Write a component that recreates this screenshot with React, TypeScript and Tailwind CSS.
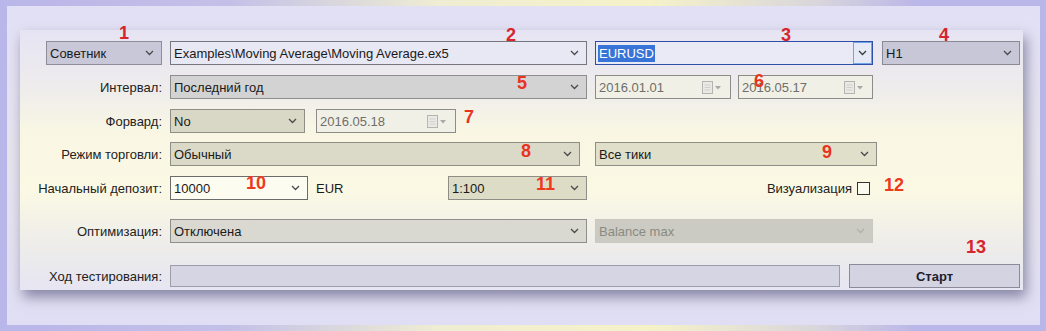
import React from "react";

const Chevron = ({ c = "#4a4a4a" }: { c?: string }) => (
  <svg width="9" height="6" viewBox="0 0 9 6" className="shrink-0">
    <path d="M1 1 L4.5 4.5 L8 1" fill="none" stroke={c} strokeWidth="1.3" />
  </svg>
);

const CalIcon = () => (
  <svg width="20" height="13" viewBox="0 0 20 13" className="shrink-0">
    <rect x="0.5" y="0.5" width="10" height="12" fill="#e9e9e6" stroke="#b4b4b0" />
    <path d="M2.5 4 H8.5 M2.5 6.5 H8.5 M2.5 9 H8.5" stroke="#d0d0cc" strokeWidth="1" />
    <path d="M13 5 L19 5 L16 8.5 Z" fill="#a8a8a8" />
  </svg>
);

function Combo({
  className,
  text,
  textClass = "text-[#1a1a1a]",
  chev,
}: {
  className: string;
  text: React.ReactNode;
  textClass?: string;
  chev?: string;
}) {
  return (
    <div
      className={`flex h-[24px] shrink-0 items-center justify-between border pl-[3px] pr-[7px] ${className}`}
    >
      <span className={textClass}>{text}</span>
      <Chevron c={chev} />
    </div>
  );
}

function DateBox({ w, value }: { w: string; value: string }) {
  return (
    <div
      className={`flex h-[24px] shrink-0 items-center justify-between border border-[#8c8c88] bg-[#f1f0e6] pl-[3px] pr-[8px] text-[#6e6e6a] ${w}`}
    >
      <span>{value}</span>
      <CalIcon />
    </div>
  );
}

const Label = ({ children }: { children: React.ReactNode }) => (
  <div className="w-[150px] shrink-0 pr-[8px] text-right text-[#222222]">{children}</div>
);

const MARKS = [
  { n: "1", x: "left-[119px]", y: "top-[24px]", c: "text-[#d6252d]" },
  { n: "2", x: "left-[506px]", y: "top-[26px]", c: "text-[#d6252d]" },
  { n: "3", x: "left-[781px]", y: "top-[26px]", c: "text-[#d6252d]" },
  { n: "4", x: "left-[939px]", y: "top-[26px]", c: "text-[#d6252d]" },
  { n: "5", x: "left-[517px]", y: "top-[74px]", c: "text-[#e8331f]" },
  { n: "6", x: "left-[754px]", y: "top-[72px]", c: "text-[#e8331f]" },
  { n: "7", x: "left-[464px]", y: "top-[108px]", c: "text-[#e8331f]" },
  { n: "8", x: "left-[521px]", y: "top-[142px]", c: "text-[#e8331f]" },
  { n: "9", x: "left-[822px]", y: "top-[143px]", c: "text-[#e8331f]" },
  { n: "10", x: "left-[246px]", y: "top-[174px]", c: "text-[#ee3a1c]" },
  { n: "11", x: "left-[536px]", y: "top-[175px]", c: "text-[#ee3a1c]" },
  { n: "12", x: "left-[884px]", y: "top-[176px]", c: "text-[#ee3a1c]" },
  { n: "13", x: "left-[966px]", y: "top-[238px]", c: "text-[#d6252d]" },
];

export default function App() {
  return (
    <div className="relative h-[331px] w-[1046px] overflow-hidden bg-[linear-gradient(90deg,#b9b6e9_0%,#c3c0e8_22%,#efedd2_42%,#f5f2c9_62%,#d9d6dc_78%,#b9b6e9_88%)] pb-[6px] pl-[7px] pr-[6px] pt-[6px] font-['Liberation_Sans',Arial,sans-serif] text-[13px] leading-none">
      <div className="h-full w-full bg-[linear-gradient(180deg,#e2e0f5_0%,#e6e4ee_45%,#e4e2f0_75%,#e0def4_100%)] pl-[13px] pt-[24px]">
        {/* tester panel */}
        <div className="h-[260px] w-[1003px] bg-[linear-gradient(180deg,#e6e4f3_0%,#eeecec_22%,#f9f7e3_40%,#fbf9e4_62%,#efeee9_80%,#e6e5f2_100%)] pt-[11px] shadow-[3px_7px_12px_rgba(60,60,100,0.55)]">
          {/* row 1 */}
          <div className="flex items-center pl-[26px]">
            <Combo className="w-[116px] border-[#8e8e9a] bg-[#c9c8d9]" text="Советник" />
            <Combo
              className="ml-[8px] w-[417px] border-[#76767e] bg-[#e8e7f4]"
              text="Examples\Moving Average\Moving Average.ex5"
            />
            <div className="ml-[8px] flex h-[24px] w-[278px] shrink-0 items-center border border-[#2e4ea8] bg-[#eae9f6]">
              <span className="ml-[2px] bg-[#3874d8] px-[1px] py-[2px] text-white">EURUSD</span>
              <div className="ml-auto flex h-full w-[19px] items-center justify-center border border-[#6ea4ea] bg-[#e6e9f6]">
                <Chevron c="#3a3a3a" />
              </div>
            </div>
            <Combo className="ml-[9px] w-[138px] border-[#8a8a94] bg-[#c8c7d7]" text="H1" />
          </div>

          {/* row 2 */}
          <div className="mt-[10px] flex items-center">
            <Label>Интервал:</Label>
            <Combo className="w-[417px] border-[#8e8e8e] bg-[#d3d3d3]" text="Последний год" />
            <div className="ml-[8px]">
              <DateBox w="w-[136px]" value="2016.01.01" />
            </div>
            <div className="ml-[7px]">
              <DateBox w="w-[135px]" value="2016.05.17" />
            </div>
          </div>

          {/* row 3 */}
          <div className="mt-[10px] flex items-center">
            <Label>Форвард:</Label>
            <Combo className="w-[135px] border-[#8e8e86] bg-[#d9d8c7]" text="No" />
            <div className="ml-[11px]">
              <DateBox w="w-[140px]" value="2016.05.18" />
            </div>
          </div>

          {/* row 4 */}
          <div className="mt-[9px] flex items-center">
            <Label>Режим торговли:</Label>
            <Combo className="w-[410px] border-[#8e8e86] bg-[#dbdac8]" text="Обычный" />
            <Combo className="ml-[15px] w-[282px] border-[#8e8e86] bg-[#e0dfca]" text="Все тики" />
          </div>

          {/* row 5 */}
          <div className="mt-[10px] flex items-center">
            <Label>Начальный депозит:</Label>
            <Combo className="w-[138px] border-[#6c6c6c] bg-[#fdfcf1]" text="10000" />
            <span className="ml-[8px] w-[132px] shrink-0 text-[#1a1a1a]">EUR</span>
            <Combo className="w-[139px] border-[#8e8e86] bg-[#dddcc7]" text="1:100" />
            <div className="flex w-[283px] shrink-0 items-center justify-end gap-[5px]">
              <span className="text-[#222222]">Визуализация</span>
              <div className="h-[13px] w-[13px] border border-[#333333] bg-[#fbfaee]" />
            </div>
          </div>

          {/* row 6 */}
          <div className="mt-[19px] flex items-center">
            <Label>Оптимизация:</Label>
            <Combo className="w-[417px] border-[#8e8e8a] bg-[#d9d9d1]" text="Отключена" />
            <Combo
              className="ml-[8px] w-[278px] border-[#c9c9c1] bg-[#cbcbc3]"
              text="Balance max"
              textClass="text-[#8a8a82]"
              chev="#b0b0aa"
            />
          </div>

          {/* row 7 */}
          <div className="mt-[21px] flex items-center">
            <Label>Ход тестирования:</Label>
            <div className="h-[22px] w-[670px] shrink-0 border border-[#9c9caa] bg-[#d6d5e3]" />
            <button className="ml-[9px] flex h-[24px] w-[171px] shrink-0 items-center justify-center border border-[#8a8a98] bg-[#d4d3e1] font-bold text-[#1e1e2e]">
              Старт
            </button>
          </div>
        </div>
      </div>

      {MARKS.map((m) => (
        <span
          key={m.n}
          className={`absolute text-[18px] font-bold leading-none ${m.x} ${m.y} ${m.c}`}
        >
          {m.n}
        </span>
      ))}
    </div>
  );
}
